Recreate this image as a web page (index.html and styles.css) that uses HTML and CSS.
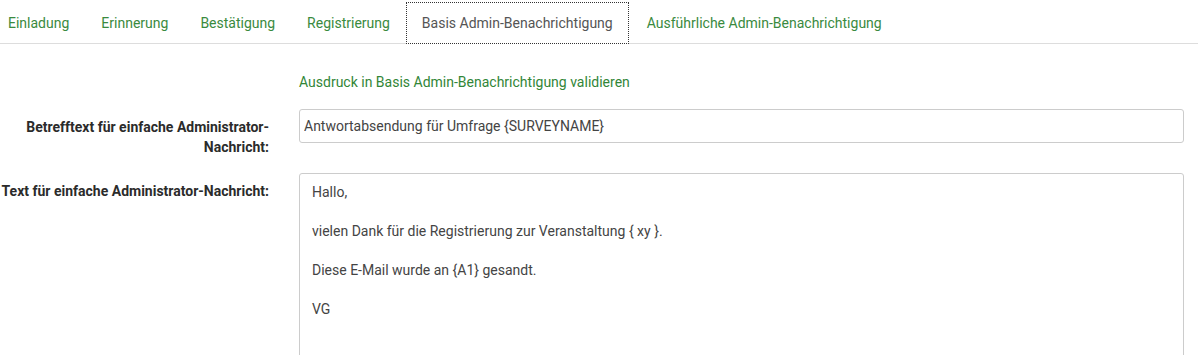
FILE: index.html
```html
<!DOCTYPE html>
<html lang="de">
<head>
<meta charset="utf-8">
<title>Admin-Benachrichtigung</title>
<link rel="stylesheet" href="styles.css">
</head>
<body>
<ul class="tabs">
  <li><a class="tab" href="#">Einladung</a></li>
  <li><a class="tab" href="#">Erinnerung</a></li>
  <li><a class="tab" href="#">Bestätigung</a></li>
  <li><a class="tab" href="#">Registrierung</a></li>
  <li><a class="tab active" href="#">Basis Admin-Benachrichtigung</a></li>
  <li><a class="tab" href="#">Ausführliche Admin-Benachrichtigung</a></li>
</ul>
<div class="pane">
  <div class="row validate-row">
    <div></div>
    <a class="validate" href="#">Ausdruck in Basis Admin-Benachrichtigung validieren</a>
  </div>
  <div class="row">
    <label class="label" for="subj">Betrefftext für einfache Administrator-Nachricht:</label>
    <div class="field"><input id="subj" class="input" type="text" value="Antwortabsendung für Umfrage {SURVEYNAME}"></div>
  </div>
  <div class="row">
    <label class="label" for="body">Text für einfache Administrator-Nachricht:</label>
    <div class="field"><div id="body" class="textarea"><p>Hallo,</p><p>&nbsp;</p><p>vielen Dank für die Registrierung zur Veranstaltung { xy }.</p><p>&nbsp;</p><p>Diese E-Mail wurde an {A1} gesandt.</p><p>&nbsp;</p><p>VG</p><p>&nbsp;</p><p>&nbsp;</p></div></div>
  </div>
</div>
</body>
</html>
```
FILE: styles.css
```css
html, body {
  margin: 0;
  padding: 0;
  background: #ffffff;
  font-family: Roboto, "Noto Sans", Arial, sans-serif;
  font-size: 14px;
  line-height: 20px;
  color: #333333;
  overflow: hidden;
}

.tabs {
  list-style: none;
  margin: 2px 0 0 -8px;
  padding: 0;
  display: flex;
  border-bottom: 1px solid #dddddd;
}

.tabs li {
  margin-bottom: -1px;
}

.tab {
  display: block;
  padding: 10px 15px;
  border: 1px solid transparent;
  color: #3a8a3e;
  text-decoration: none;
  line-height: 20px;
}

.tab.active {
  color: #555555;
  background: #ffffff;
  border: 1px dotted #333333;
  margin-right: 2px;
}

.pane {
  padding: 28px 14px 0 0;
}

.row {
  display: grid;
  grid-template-columns: 269px 1fr;
  column-gap: 30px;
  margin-bottom: 16px;
}

.validate-row {
  margin-bottom: 17px;
}

.validate {
  color: #328637;
  text-decoration: none;
}

.label {
  font-weight: bold;
  text-align: right;
  padding-top: 8px;
  color: #2b2b2b;
}

.input {
  box-sizing: border-box;
  display: block;
  width: 100%;
  height: 34px;
  margin: 0;
  padding: 0 4px;
  border: 1px solid #cccccc;
  border-radius: 3px;
  font-family: inherit;
  font-size: 14px;
  color: #444444;
  background: #ffffff;
}

.textarea {
  box-sizing: border-box;
  border: 1px solid #cccccc;
  border-radius: 3px;
  padding: 9px 12px;
  height: 220px;
  color: #444444;
}

.textarea p {
  margin: 0;
  line-height: 19.5px;
}
```
